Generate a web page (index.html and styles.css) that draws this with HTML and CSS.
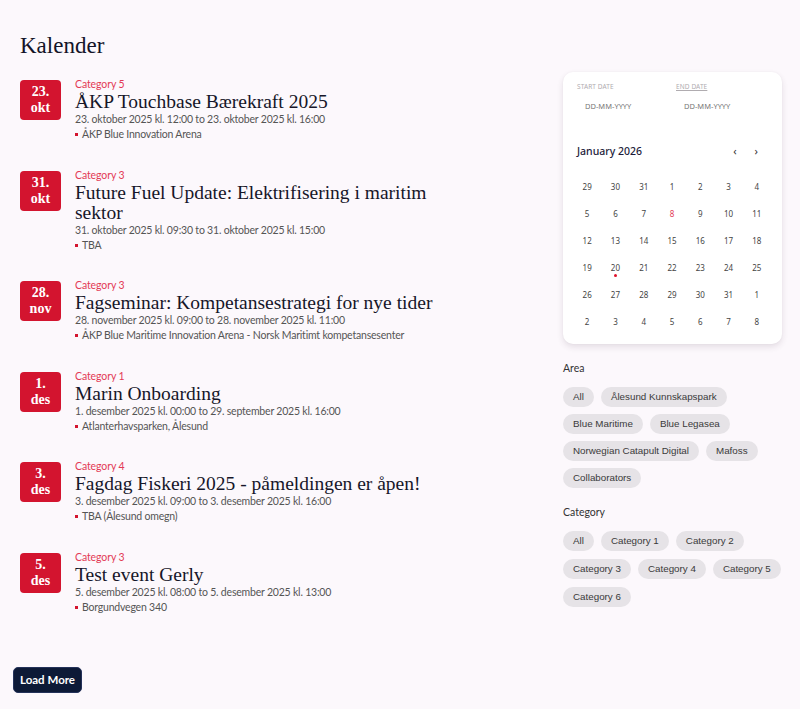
FILE: index.html
```html
<!DOCTYPE html>
<html lang="no">
<head>
<meta charset="utf-8">
<title>Kalender</title>
<link rel="stylesheet" href="styles.css">
</head>
<body>
<div class="page">
  <h1 class="page-title">Kalender</h1>
  <div class="layout">
    <main class="events">
      <article class="event">
        <div class="badge"><span>23.</span><span>okt</span></div>
        <div class="event-body">
          <div class="event-cat">Category 5</div>
          <h2 class="event-title">ÅKP Touchbase Bærekraft 2025</h2>
          <div class="event-time">23. oktober 2025 kl. 12:00 to 23. oktober 2025 kl. 16:00</div>
          <div class="event-loc"><i class="dot"></i>ÅKP Blue Innovation Arena</div>
        </div>
      </article>
      <article class="event">
        <div class="badge"><span>31.</span><span>okt</span></div>
        <div class="event-body">
          <div class="event-cat">Category 3</div>
          <h2 class="event-title">Future Fuel Update: Elektrifisering i maritim sektor</h2>
          <div class="event-time">31. oktober 2025 kl. 09:30 to 31. oktober 2025 kl. 15:00</div>
          <div class="event-loc"><i class="dot"></i>TBA</div>
        </div>
      </article>
      <article class="event">
        <div class="badge"><span>28.</span><span>nov</span></div>
        <div class="event-body">
          <div class="event-cat">Category 3</div>
          <h2 class="event-title">Fagseminar: Kompetansestrategi for nye tider</h2>
          <div class="event-time">28. november 2025 kl. 09:00 to 28. november 2025 kl. 11:00</div>
          <div class="event-loc"><i class="dot"></i>ÅKP Blue Maritime Innovation Arena - Norsk Maritimt kompetansesenter</div>
        </div>
      </article>
      <article class="event">
        <div class="badge"><span>1.</span><span>des</span></div>
        <div class="event-body">
          <div class="event-cat">Category 1</div>
          <h2 class="event-title">Marin Onboarding</h2>
          <div class="event-time">1. desember 2025 kl. 00:00 to 29. september 2025 kl. 16:00</div>
          <div class="event-loc"><i class="dot"></i>Atlanterhavsparken, Ålesund</div>
        </div>
      </article>
      <article class="event">
        <div class="badge"><span>3.</span><span>des</span></div>
        <div class="event-body">
          <div class="event-cat">Category 4</div>
          <h2 class="event-title">Fagdag Fiskeri 2025 - påmeldingen er åpen!</h2>
          <div class="event-time">3. desember 2025 kl. 09:00 to 3. desember 2025 kl. 16:00</div>
          <div class="event-loc"><i class="dot"></i>TBA (Ålesund omegn)</div>
        </div>
      </article>
      <article class="event">
        <div class="badge"><span>5.</span><span>des</span></div>
        <div class="event-body">
          <div class="event-cat">Category 3</div>
          <h2 class="event-title">Test event Gerly</h2>
          <div class="event-time">5. desember 2025 kl. 08:00 to 5. desember 2025 kl. 13:00</div>
          <div class="event-loc"><i class="dot"></i>Borgundvegen 340</div>
        </div>
      </article>
    </main>

    <aside class="sidebar">
      <div class="calendar">
        <div class="date-inputs">
          <div class="date-field">
            <div class="date-label">START DATE</div>
            <div class="date-value">DD-MM-YYYY</div>
          </div>
          <div class="date-field">
            <div class="date-label under">END DATE</div>
            <div class="date-value">DD-MM-YYYY</div>
          </div>
        </div>
        <div class="month-head">
          <span class="month-name">January 2026</span>
          <span class="nav"><span>&#8249;</span><span>&#8250;</span></span>
        </div>
        <div class="days">
          <span>29</span><span>30</span><span>31</span><span>1</span><span>2</span><span>3</span><span>4</span>
          <span>5</span><span>6</span><span>7</span><span class="today">8</span><span>9</span><span>10</span><span>11</span>
          <span>12</span><span>13</span><span>14</span><span>15</span><span>16</span><span>17</span><span>18</span>
          <span>19</span><span class="has-event">20</span><span>21</span><span>22</span><span>23</span><span>24</span><span>25</span>
          <span>26</span><span>27</span><span>28</span><span>29</span><span>30</span><span>31</span><span>1</span>
          <span>2</span><span>3</span><span>4</span><span>5</span><span>6</span><span>7</span><span>8</span>
        </div>
      </div>

      <section class="filter">
        <h3 class="filter-title">Area</h3>
        <div class="chips">
          <span class="chip">All</span>
          <span class="chip">Ålesund Kunnskapspark</span>
          <span class="chip">Blue Maritime</span>
          <span class="chip">Blue Legasea</span>
          <span class="chip">Norwegian Catapult Digital</span>
          <span class="chip">Mafoss</span>
          <span class="chip">Collaborators</span>
        </div>
      </section>

      <section class="filter">
        <h3 class="filter-title">Category</h3>
        <div class="chips category-chips">
          <span class="chip">All</span>
          <span class="chip">Category 1</span>
          <span class="chip">Category 2</span>
          <span class="chip">Category 3</span>
          <span class="chip">Category 4</span>
          <span class="chip">Category 5</span>
          <span class="chip">Category 6</span>
        </div>
      </section>
    </aside>
  </div>
  <button class="load-more">Load More</button>
</div>
</body>
</html>
```

FILE: styles.css
```css
* { box-sizing: border-box; }
html, body { margin: 0; padding: 0; }
body {
  background: #fcf8fc;
  font-family: Lato, "Noto Sans", sans-serif;
  color: #333;
}
.page {
  padding: 34px 18px 0 20px;
}
.page-title {
  margin: 0 0 14px;
  font-family: "Liberation Serif", serif;
  font-weight: 400;
  font-size: 23px;
  line-height: 24px;
  color: #141428;
}
.layout {
  display: grid;
  grid-template-columns: 440px 219px;
  justify-content: space-between;
  align-items: start;
}
.events {
  display: flex;
  flex-direction: column;
  gap: 25.6px;
  padding-top: 5px;
}
.event {
  display: flex;
  gap: 14px;
  align-items: flex-start;
}
.badge {
  flex: none;
  width: 41px;
  height: 40px;
  margin-top: 3px;
  background: #d3142f;
  border-radius: 4px;
  color: #fff;
  font-family: "Liberation Serif", serif;
  font-weight: 700;
  font-size: 14px;
  line-height: 16px;
  display: flex;
  flex-direction: column;
  align-items: center;
  justify-content: center;
}
.event-body { min-width: 0; }
.event-cat {
  color: #e33a55;
  font-size: 10.5px;
  line-height: 15px;
  letter-spacing: -0.1px;
}
.event-title {
  margin: 0;
  font-family: "Liberation Serif", serif;
  font-weight: 400;
  font-size: 19.5px;
  line-height: 20px;
  color: #161629;
}
.event-time,
.event-loc {
  font-size: 10.5px;
  line-height: 15px;
  color: #555;
  letter-spacing: -0.2px;
}
.event-loc {
  display: flex;
  align-items: center;
}
.dot {
  width: 3px;
  height: 3px;
  background: #d3142f;
  margin-right: 4px;
  display: inline-block;
}
.sidebar { display: flex; flex-direction: column; }
.calendar {
  background: #fff;
  border-radius: 10px;
  box-shadow: 0 3px 6px rgba(60, 30, 60, 0.12), 0 0 2px rgba(60, 30, 60, 0.04);
  padding: 11px 11px 9px 10px;
  font-family: "Noto Sans", sans-serif;
}
.date-inputs {
  display: grid;
  grid-template-columns: 99px 1fr;
  padding: 0 4px;
}
.date-label {
  font-size: 6.5px;
  line-height: 8px;
  color: #b0acb0;
  letter-spacing: 0.1px;
}
.date-label.under { text-decoration: underline; }
.date-value {
  font-size: 7.5px;
  line-height: 10px;
  color: #777;
  margin-top: 10px;
  padding-left: 8px;
}
.month-head {
  display: flex;
  justify-content: space-between;
  align-items: center;
  margin-top: 33px;
  padding: 0 4px;
  line-height: 14px;
}
.month-name {
  font-size: 10.5px;
  font-weight: 500;
  color: #1c1c3a;
}
.nav { display: flex; gap: 18px; font-size: 11px; color: #333; padding-right: 9px; }
.days {
  display: grid;
  grid-template-columns: repeat(7, 1fr);
  grid-auto-rows: 27px;
  margin-top: 15px;
  font-size: 8px;
  color: #444;
  text-align: center;
  align-items: center;
}
.days span { position: relative; }
.days .today { color: #e33a55; }
.days .has-event::after {
  content: "";
  position: absolute;
  left: 50%;
  top: 12px;
  width: 3px;
  height: 3px;
  margin-left: -1.5px;
  border-radius: 50%;
  background: #e0102a;
}
.filter { margin-top: 17px; }
.filter + .filter { margin-top: 17px; }
.filter-title {
  margin: 0 0 12px;
  font-weight: 400;
  font-size: 10.5px;
  line-height: 14px;
  color: #333;
}
.chips {
  display: flex;
  flex-wrap: wrap;
  gap: 7px 7px;
}
.category-chips { row-gap: 8px; }
.chip {
  font-family: "Liberation Sans", Arial, sans-serif;
  font-size: 9.8px;
  color: #3a3a3a;
  background: #e6e3e7;
  border-radius: 10px;
  height: 20px;
  line-height: 20px;
  padding: 0 10px;
}
.load-more {
  margin: 52px 0 16px -7px;
  background: #0d1a37;
  color: #fff;
  border: 1px solid #24325a;
  border-radius: 5px;
  font-family: Lato, sans-serif;
  font-weight: 700;
  font-size: 11.5px;
  height: 26px;
  padding: 0 6px;
}
```
